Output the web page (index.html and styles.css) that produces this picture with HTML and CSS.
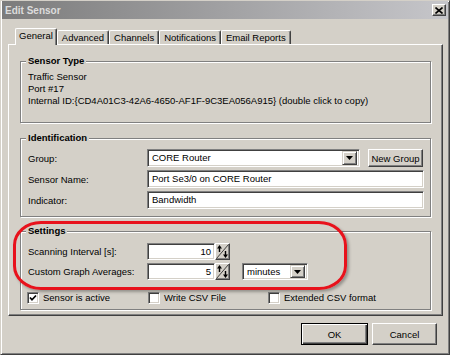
FILE: index.html
```html
<!DOCTYPE html>
<html lang="en">
<head>
  <meta charset="UTF-8">
  <title>Edit Sensor</title>
  <link rel="stylesheet" href="styles.css">
</head>
<body>
  <div class="window">
    <div class="titlebar">
      <span class="title">Edit Sensor</span>
      <span class="close">
        <svg width="8" height="7" viewBox="0 0 8 7"><path d="M0.5 0.5 L7.5 6.5 M7.5 0.5 L0.5 6.5" stroke="#000" stroke-width="1.6"/></svg>
      </span>
    </div>

    <div class="tabs">
      <div class="tab active">General</div>
      <div class="tab">Advanced</div>
      <div class="tab">Channels</div>
      <div class="tab">Notifications</div>
      <div class="tab">Email Reports</div>
    </div>

    <div class="panel">
      <div class="group sensor-type">
        <div class="group-title">Sensor Type</div>
        <div class="info">
          <div>Traffic Sensor</div>
          <div>Port #17</div>
          <div>Internal ID:{CD4A01C3-42A6-4650-AF1F-9C3EA056A915} (double click to copy)</div>
        </div>
      </div>

      <div class="group identification">
        <div class="group-title">Identification</div>
        <div class="rows">
          <div class="row">
            <label>Group:</label>
            <div class="field combo">
              <span>CORE Router</span>
              <span class="drop"><svg width="7" height="4" viewBox="0 0 7 4"><polygon points="0,0 7,0 3.5,4" fill="#000"/></svg></span>
            </div>
            <button class="btn small">New Group</button>
          </div>
          <div class="row">
            <label>Sensor Name:</label>
            <div class="field grow">Port Se3/0 on CORE Router</div>
          </div>
          <div class="row">
            <label>Indicator:</label>
            <div class="field grow">Bandwidth</div>
          </div>
        </div>
      </div>

      <div class="group settings">
        <div class="group-title">Settings</div>
        <div class="rows">
          <div class="row short">
            <label>Scanning Interval [s]:</label>
            <div class="spin">
              <div class="field num">10</div>
              <span class="spin-btn">
                <svg width="13" height="15" viewBox="0 0 13 15"><path d="M0.5 14.5 L12.5 0.5" stroke="#404040" stroke-width="1"/><path d="M3.5 3 V8 M9.5 7 V12" stroke="#000" stroke-width="1.4"/><polygon points="1,4.5 3.5,1 6,4.5" fill="#000"/><polygon points="7,10.5 9.5,14 12,10.5" fill="#000"/></svg>
              </span>
            </div>
          </div>
          <div class="row short">
            <label>Custom Graph Averages:</label>
            <div class="spin">
              <div class="field num">5</div>
              <span class="spin-btn">
                <svg width="13" height="15" viewBox="0 0 13 15"><path d="M0.5 14.5 L12.5 0.5" stroke="#404040" stroke-width="1"/><path d="M3.5 3 V8 M9.5 7 V12" stroke="#000" stroke-width="1.4"/><polygon points="1,4.5 3.5,1 6,4.5" fill="#000"/><polygon points="7,10.5 9.5,14 12,10.5" fill="#000"/></svg>
              </span>
            </div>
            <div class="field combo unit">
              <span>minutes</span>
              <span class="drop"><svg width="7" height="4" viewBox="0 0 7 4"><polygon points="0,0 7,0 3.5,4" fill="#000"/></svg></span>
            </div>
          </div>
        </div>
        <div class="checks">
          <div class="check">
            <span class="box"><svg width="8" height="8" viewBox="0 0 8 8"><polyline points="1,3.5 3,5.8 7,1.5" fill="none" stroke="#000" stroke-width="1.7"/></svg></span>
            Sensor is active
          </div>
          <div class="check"><span class="box"></span> Write CSV File</div>
          <div class="check"><span class="box"></span> Extended CSV format</div>
        </div>
      </div>
    </div>

    <div class="footer">
      <button class="btn default">OK</button>
      <button class="btn">Cancel</button>
    </div>

    <div class="highlight"></div>
  </div>
</body>
</html>
```

FILE: styles.css
```css
* {
  box-sizing: border-box;
}
body {
  margin: 0;
  background-color: #d4d0c8;
  font-family: "Liberation Sans", Arial, sans-serif;
  font-size: 9.5px;
  color: #000;
}
.window {
  position: relative;
  width: 450px;
  height: 355px;
  padding: 0 1px 1px 1px;
  background-color: #d4d0c8;
  border: 1px solid;
  border-color: #d4d0c8 #404040 #404040 #d4d0c8;
  box-shadow: inset 1px 1px #fff, inset -1px -1px #808080;
}
.titlebar {
  height: 18px;
  display: flex;
  align-items: center;
  justify-content: space-between;
  padding: 0 2px 0 3px;
  background: linear-gradient(to right, #7c7c7c, #c6c6ca);
}
.title {
  color: #dcdcdc;
  font-weight: bold;
  font-size: 10px;
}
.close {
  width: 14px;
  height: 12px;
  display: flex;
  align-items: center;
  justify-content: center;
  background-color: #d4d0c8;
  border: 1px solid;
  border-color: #fff #404040 #404040 #fff;
  box-shadow: inset -1px -1px #808080;
}

/* tabs */
.tabs {
  display: flex;
  align-items: flex-end;
  height: 16px;
  margin-top: 9px;
  padding-left: 13px;
  position: relative;
  z-index: 1;
}
.tab {
  height: 14px;
  line-height: 13px;
  padding: 0 4px;
  border-top: 1px solid #fff;
  border-left: 1px solid #fff;
  border-right: 1px solid #404040;
  box-shadow: inset -1px 0 #808080;
  border-radius: 2px 2px 0 0;
  background-color: #d4d0c8;
}
.tab.active {
  height: 17px;
  margin-bottom: -1px;
  padding: 0 3px;
  line-height: 13px;
}

.panel {
  height: 272px;
  margin: 0 5px 0 6px;
  padding: 0 11px;
  border: 1px solid;
  border-color: #fff #404040 #404040 #fff;
  box-shadow: inset -1px -1px #808080;
}

/* group boxes */
.group {
  border: 1px solid #808080;
  box-shadow: inset 1px 1px #fff, 1px 1px #fff;
  padding: 0 6px 0 7px;
}
.group-title {
  display: table;
  margin: -7px 0 0 -2px;
  padding: 0 2px;
  line-height: 12px;
  font-weight: bold;
  background-color: #d4d0c8;
}
.sensor-type {
  margin-top: 16px;
  padding-bottom: 15px;
}
.info {
  margin-top: 4px;
  line-height: 12px;
}
.identification {
  margin-top: 15px;
  padding-bottom: 7px;
}
.settings {
  margin-top: 14px;
  padding-bottom: 5px;
}
.rows {
  display: flex;
  flex-direction: column;
  gap: 3px;
  margin-top: 5px;
}
.settings .rows {
  margin-top: 6px;
}
.row {
  display: flex;
  align-items: center;
  height: 18px;
}
.row.short {
  height: 17px;
}
.row label {
  width: 119px;
  flex-shrink: 0;
}

/* inputs */
.field {
  height: 18px;
  line-height: 16px;
  padding: 0 4px;
  background-color: #fff;
  border: 1px solid;
  border-color: #808080 #fff #fff #808080;
  box-shadow: inset 1px 1px #404040, inset -1px -1px #d4d0c8;
  white-space: nowrap;
}
.field.grow {
  flex: 1;
}
.combo {
  width: 213px;
  display: flex;
  align-items: center;
  justify-content: space-between;
  padding-right: 2px;
}
.drop {
  width: 15px;
  height: 14px;
  display: flex;
  align-items: center;
  justify-content: center;
  background-color: #d4d0c8;
  border: 1px solid;
  border-color: #d4d0c8 #404040 #404040 #d4d0c8;
  box-shadow: inset 1px 1px #fff, inset -1px -1px #808080;
}
.spin {
  display: flex;
  height: 17px;
}
.field.num {
  width: 68px;
  height: 17px;
  line-height: 15px;
  text-align: right;
  padding-right: 3px;
}
.spin-btn {
  width: 15px;
  height: 17px;
  display: flex;
  align-items: center;
  justify-content: center;
  background-color: #d4d0c8;
  border: 1px solid;
  border-color: #fff #404040 #404040 #fff;
  box-shadow: inset -1px -1px #808080;
}
.unit {
  width: 66px;
  height: 17px;
  line-height: 15px;
  margin-left: 12px;
}
.unit .drop {
  height: 13px;
}

/* checkboxes */
.checks {
  display: grid;
  grid-template-columns: 121px 120px auto;
  margin-top: 11px;
  height: 13px;
}
.check {
  display: flex;
  align-items: center;
  gap: 4px;
  margin-left: -1px;
}
.box {
  width: 12px;
  height: 12px;
  display: flex;
  align-items: center;
  justify-content: center;
  background-color: #fff;
  border: 1px solid;
  border-color: #808080 #fff #fff #808080;
  box-shadow: inset 1px 1px #404040, inset -1px -1px #d4d0c8;
}

/* buttons */
.btn {
  font-family: inherit;
  font-size: 9.5px;
  color: #000;
  background-color: #d4d0c8;
  border: 1px solid;
  border-color: #fff #404040 #404040 #fff;
  box-shadow: inset -1px -1px #808080;
  padding: 0;
}
.btn.small {
  width: 55px;
  height: 18px;
  margin-left: 8px;
}
.footer {
  display: flex;
  justify-content: flex-end;
  gap: 4px;
  margin-top: 7px;
  padding-right: 11px;
}
.footer .btn {
  width: 65px;
  height: 22px;
}
.btn.default {
  width: 67px;
  border-color: #000;
  box-shadow: inset 1px 1px #fff, inset -1px -1px #404040, inset -2px -2px #808080;
}

/* red marker drawn over the settings box */
.highlight {
  position: absolute;
  left: 12px;
  top: 220px;
  width: 334px;
  height: 69px;
  border: 3px solid #e8121c;
  border-radius: 28px / 24px;
  box-shadow: 2px 2px 3px rgba(0, 0, 0, 0.3);
}
```
